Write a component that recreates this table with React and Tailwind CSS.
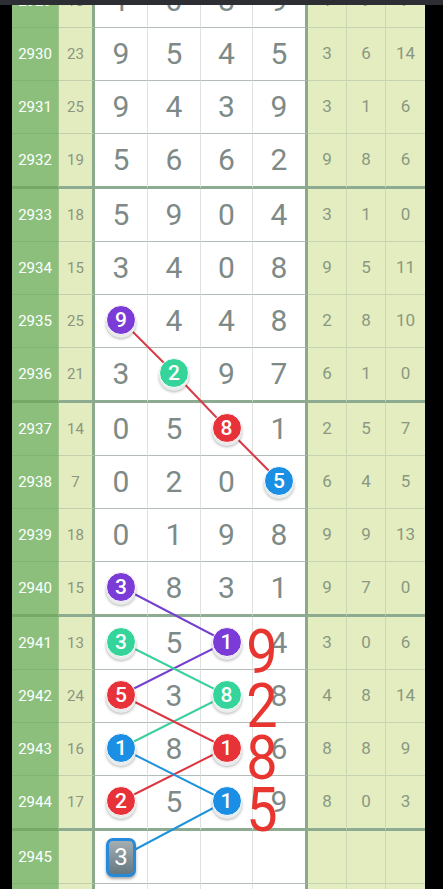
import React from "react";

const rows = [
  { p: "2929", s: "18", d: [1, 0, 8, 9], r: [1, 9, 7] },
  { p: "2930", s: "23", d: [9, 5, 4, 5], r: [3, 6, 14] },
  { p: "2931", s: "25", d: [9, 4, 3, 9], r: [3, 1, 6] },
  { p: "2932", s: "19", d: [5, 6, 6, 2], r: [9, 8, 6] },
  { p: "2933", s: "18", d: [5, 9, 0, 4], r: [3, 1, 0] },
  { p: "2934", s: "15", d: [3, 4, 0, 8], r: [9, 5, 11] },
  { p: "2935", s: "25", d: [9, 4, 4, 8], r: [2, 8, 10] },
  { p: "2936", s: "21", d: [3, 2, 9, 7], r: [6, 1, 0] },
  { p: "2937", s: "14", d: [0, 5, 8, 1], r: [2, 5, 7] },
  { p: "2938", s: "7", d: [0, 2, 0, 5], r: [6, 4, 5] },
  { p: "2939", s: "18", d: [0, 1, 9, 8], r: [9, 9, 13] },
  { p: "2940", s: "15", d: [3, 8, 3, 1], r: [9, 7, 0] },
  { p: "2941", s: "13", d: [3, 5, 1, 4], r: [3, 0, 6] },
  { p: "2942", s: "24", d: [5, 3, 8, 8], r: [4, 8, 14] },
  { p: "2943", s: "16", d: [1, 8, 1, 6], r: [8, 8, 9] },
  { p: "2944", s: "17", d: [2, 5, 1, 9], r: [8, 0, 3] },
  { p: "2945", s: "", d: ["", "", "", ""], r: ["", "", ""] },
  { p: "", s: "", d: ["", "", "", ""], r: ["", "", ""] },
];

const balls = {
  "2935-0": "purple",
  "2936-1": "green",
  "2937-2": "red",
  "2938-3": "blue",
  "2940-0": "purple",
  "2941-0": "green",
  "2941-2": "purple",
  "2942-0": "red",
  "2942-2": "green",
  "2943-0": "blue",
  "2943-2": "red",
  "2944-0": "red",
  "2944-2": "blue",
};

const ballBg = {
  purple: "bg-[#7b3bd6]",
  green: "bg-[#34d49a]",
  red: "bg-[#e8323a]",
  blue: "bg-[#1a8fe3]",
};

function Ball({ color, n }) {
  return (
    <div
      className={`relative z-20 -mt-[2px] flex h-[30px] w-[30px] items-center justify-center rounded-full border border-white ${ballBg[color]} text-[21px] font-medium leading-none text-white shadow-[0_3px_0_#e9ecec,0_4px_3px_rgba(0,0,0,0.3)]`}
    >
      {n}
    </div>
  );
}

function SelBox() {
  return (
    <div className="relative z-20 flex h-[39px] w-[30px] items-center justify-center rounded-[7px] bg-[#2589dc] p-[3px] shadow-[0_2px_3px_rgba(0,0,0,0.35)]">
      <div className="flex h-full w-full items-center justify-center rounded-[4px] bg-gradient-to-b from-[#a3aeb2] to-[#66787f] text-[24px] leading-none text-white">
        3
      </div>
    </div>
  );
}

function Row({ row, idx }) {
  const thick = idx % 4 === 3;
  const bb = thick ? "border-b-[3px]" : "border-b";
  const digitW = ["w-[53px]", "w-[53px]", "w-[52px]", "w-[55px]"];
  const digitBr = [
    "border-r border-r-[#dde2de]",
    "border-r border-r-[#dde2de]",
    "border-r border-r-[#dde2de]",
    "border-r-[3px] border-r-[#8aa98d]",
  ];
  const rW = ["w-[39px]", "w-[39px]", "w-[39px]"];
  const rBr = [
    "border-r border-r-[#cbd7b5]",
    "border-r border-r-[#cbd7b5]",
    "",
  ];
  return (
    <div className="flex">
      <div
        className={`flex w-[47px] shrink-0 items-center justify-center border-r border-r-[#a3c58f] bg-[#8cbf7c] text-[15px] text-white ${bb} ${
          thick ? "h-[55px] border-b-[#76a868]" : "h-[53px] border-b-[#80b571]"
        }`}
      >
        {row.p}
      </div>
      <div
        className={`flex w-[36px] shrink-0 items-center justify-center border-r-[3px] border-r-[#8aa98d] bg-[#e2ecbf] text-[15px] text-[#8b957f] ${bb} ${
          thick ? "h-[55px] border-b-[#8dab90]" : "h-[53px] border-b-[#c4d0ad]"
        }`}
      >
        {row.s}
      </div>
      {row.d.map((v, i) => {
        const key = `${row.p}-${i}`;
        const b = balls[key];
        return (
          <div
            key={i}
            className={`flex shrink-0 items-center justify-center bg-white text-[30px] leading-none text-[#7e8a87] ${digitW[i]} ${digitBr[i]} ${bb} ${
              thick ? "h-[55px] border-b-[#8dab90]" : "h-[53px] border-b-[#b5bdb8]"
            }`}
          >
            {b ? <Ball color={b} n={v} /> : row.p === "2945" && i === 0 ? <SelBox /> : v}
          </div>
        );
      })}
      {row.r.map((v, i) => (
        <div
          key={i}
          className={`flex shrink-0 items-center justify-center bg-[#e3edc0] text-[17px] text-[#8a9882] ${rW[i]} ${rBr[i]} ${bb} ${
            thick ? "h-[55px] border-b-[#8dab90]" : "h-[53px] border-b-[#c6d3b0]"
          }`}
        >
          {v}
        </div>
      ))}
    </div>
  );
}

const C1 = 121;
const C2 = 174;
const C3 = 226.5;
const C4 = 279;

export default function App() {
  return (
    <div className="relative h-[889px] w-[443px] overflow-hidden bg-black font-['Roboto',sans-serif]">
      <div className="relative z-40 h-[5px] w-full bg-[#2c2e33]" />
      <div className="flex">
        <div className="w-[12px] shrink-0" />
        <div className="-mt-[30px] flex flex-col">
          {rows.map((row, idx) => (
            <Row key={idx} row={row} idx={idx} />
          ))}
        </div>
      </div>

      <svg
        className="pointer-events-none absolute left-0 top-0 z-10"
        width="443"
        height="889"
        viewBox="0 0 443 889"
      >
        <polyline
          points={`${C1},320 ${C2},373 ${C3},428 ${C4},481`}
          fill="none"
          stroke="#d63c4a"
          strokeWidth="2"
        />
        <polyline
          points={`${C1},587 ${C3},642 ${C1},695`}
          fill="none"
          stroke="#7540cf"
          strokeWidth="2"
        />
        <polyline
          points={`${C1},642 ${C3},695 ${C1},748`}
          fill="none"
          stroke="#3ccf9e"
          strokeWidth="2"
        />
        <polyline
          points={`${C1},695 ${C3},748 ${C1},801`}
          fill="none"
          stroke="#dc3640"
          strokeWidth="2"
        />
        <polyline
          points={`${C1},748 ${C3},801 ${C1},857`}
          fill="none"
          stroke="#1f93db"
          strokeWidth="2"
        />
      </svg>

      {[
        ["9", 621],
        ["2", 675],
        ["8", 727],
        ["5", 779],
      ].map(([d, t]) => (
        <div
          key={d}
          className="pointer-events-none absolute z-30 left-[240px] w-[44px] scale-x-[0.9] text-center text-[62px] leading-none text-[#e8352f]"
          style={{ top: t }}
        >
          {d}
        </div>
      ))}
    </div>
  );
}
